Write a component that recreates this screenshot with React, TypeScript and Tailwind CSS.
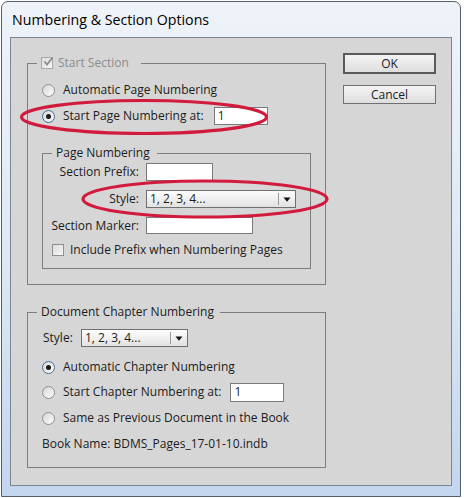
import React from 'react';

function Radio({ checked }: { checked?: boolean }) {
  return (
    <span
      className={`flex h-[13px] w-[13px] shrink-0 items-center justify-center rounded-full border bg-linear-to-br from-[#d9d9d9] to-[#fbfbfb] ${
        checked ? 'border-[#3f6f9c]' : 'border-[#8e8f8f]'
      }`}
    >
      {checked && <span className="h-[5px] w-[5px] rounded-full bg-[#1a1a1a]" />}
    </span>
  );
}

function Checkbox({ checked, disabled }: { checked?: boolean; disabled?: boolean }) {
  return (
    <span
      className={`relative flex h-[12px] w-[12px] shrink-0 items-center justify-center border bg-linear-to-br from-[#dcdcdc] to-[#f7f7f7] ${
        disabled ? 'border-[#a9a9a9]' : 'border-[#8f8f8f]'
      }`}
    >
      {checked && (
        <svg width="11" height="11" viewBox="0 0 11 11" className="absolute left-[1px] top-[-2px]">
          <path d="M1.5 5.5 L4 8.5 L9.5 1.5" fill="none" stroke="#8c8c8c" strokeWidth="1.8" />
        </svg>
      )}
    </span>
  );
}

function Dropdown({ className }: { className: string }) {
  return (
    <div
      className={`flex h-[18px] items-center border border-[#6f6f6f] bg-linear-to-b from-[#fdfdfd] to-[#e2e2e2] ${className}`}
    >
      <span className="flex-1 pl-[3px] leading-none">1, 2, 3, 4...</span>
      <span className="h-[12px] w-px bg-[#9a9a9a]" />
      <span className="flex w-[16px] items-center justify-center">
        <svg width="8" height="5" viewBox="0 0 8 5">
          <path d="M0.5 0.5 H7.5 L4 4.8 Z" fill="#111" />
        </svg>
      </span>
    </div>
  );
}

function TextBox({ className, value }: { className: string; value?: string }) {
  return (
    <div className={`flex items-center border border-[#7a7a7a] bg-white pl-[3px] leading-none ${className}`}>
      {value}
    </div>
  );
}

export default function App() {
  return (
    <div className="relative h-[498px] w-[464px] overflow-hidden bg-white font-['Open_Sans',sans-serif] text-[12px] text-[#1c1c1c]">
      <div className="ml-[1px] mt-[1px] flex h-[496px] w-[460px] flex-col rounded-t-[7px] border border-[#56606b] bg-linear-to-b from-[#eef3f9] via-[#dfe9f4] to-[#c2d6ee] px-[8px] pb-[10px]">
        {/* Title */}
        <div className="flex h-[35px] items-center pl-[2px] pt-[1px] text-[14.2px] text-black">
          Numbering &amp; Section Options
        </div>

        {/* Content */}
        <div className="flex flex-1 border border-[#7d8791] bg-[#d6d6d6] pl-[16px] pt-[15px]">
          <div className="mt-[3px] w-[299px]">
            {/* Start Section */}
            <fieldset className="border border-[#7d7d7d] px-[14px] pb-[15px]">
              <legend className="ml-[-5px] flex h-[14px] items-center gap-[5px] pl-[4px] pr-[12px] text-[#8c8c8c]">
                <Checkbox checked disabled />
                Start Section
              </legend>
              <div className="mt-[10px] flex h-[20px] items-center gap-[8px]">
                <Radio />
                <span>Automatic Page Numbering</span>
              </div>
              <div className="mt-[6px] flex h-[20px] items-center gap-[8px]">
                <Radio checked />
                <span>Start Page Numbering at:</span>
                <TextBox className="ml-[2px] h-[18px] w-[54px]" value="1" />
              </div>

              {/* Page Numbering */}
              <fieldset className="mt-[20px] border border-[#7d7d7d] pb-[10px]">
                <legend className="ml-[9px] flex h-[14px] items-center pl-[4px] pr-[7px]">Page Numbering</legend>
                <div className="mt-[3px] flex h-[18px] items-center gap-[7px]">
                  <span className="w-[96px] text-right">Section Prefix:</span>
                  <TextBox className="h-[18px] w-[67px]" />
                </div>
                <div className="mt-[9px] flex h-[18px] items-center gap-[7px]">
                  <span className="w-[96px] text-right">Style:</span>
                  <Dropdown className="w-[150px]" />
                </div>
                <div className="mt-[9px] flex h-[17px] items-center gap-[7px]">
                  <span className="w-[96px] text-right">Section Marker:</span>
                  <TextBox className="h-[17px] w-[107px]" />
                </div>
                <div className="ml-[9px] mt-[8px] flex h-[16px] items-center gap-[6px]">
                  <Checkbox />
                  <span>Include Prefix when Numbering Pages</span>
                </div>
              </fieldset>
            </fieldset>

            {/* Document Chapter Numbering */}
            <fieldset className="mt-[20px] border border-[#7d7d7d] px-[14px] pb-[13px]">
              <legend className="ml-[-5px] flex h-[14px] items-center pl-[4px] pr-[6px]">Document Chapter Numbering</legend>
              <div className="mt-[10px] flex h-[18px] items-center">
                <span className="w-[39px] pl-px">Style:</span>
                <Dropdown className="w-[107px]" />
              </div>
              <div className="mt-[10px] flex h-[20px] items-center gap-[8px]">
                <Radio checked />
                <span>Automatic Chapter Numbering</span>
              </div>
              <div className="mt-[5px] flex h-[20px] items-center gap-[8px]">
                <Radio />
                <span>Start Chapter Numbering at:</span>
                <TextBox className="ml-[1px] h-[19px] w-[54px]" value="1" />
              </div>
              <div className="mt-[6px] flex h-[20px] items-center gap-[8px]">
                <Radio />
                <span>Same as Previous Document in the Book</span>
              </div>
              <div className="mt-[6px] flex h-[20px] items-center">Book Name: BDMS_Pages_17-01-10.indb</div>
            </fieldset>
          </div>

          {/* Buttons */}
          <div className="ml-[17px] flex flex-col">
            <button className="h-[21px] w-[93px] border-2 border-[#5a5a5a] bg-linear-to-b from-[#f4f4f4] to-[#dedede] leading-none text-[#1c1c1c]">
              OK
            </button>
            <button className="mt-[11px] h-[19px] w-[93px] border border-[#707070] bg-linear-to-b from-[#f4f4f4] to-[#dedede] leading-none text-[#1c1c1c]">
              Cancel
            </button>
          </div>
        </div>
      </div>

      {/* Red annotation ellipses */}
      <svg className="pointer-events-none absolute left-0 top-0" width="464" height="498" viewBox="0 0 464 498">
        <ellipse cx="144" cy="117" rx="122.5" ry="16.5" fill="none" stroke="#d11a3c" strokeWidth="3.2" />
        <ellipse cx="205" cy="199" rx="122" ry="18" fill="none" stroke="#d11a3c" strokeWidth="3.2" />
      </svg>
    </div>
  );
}
